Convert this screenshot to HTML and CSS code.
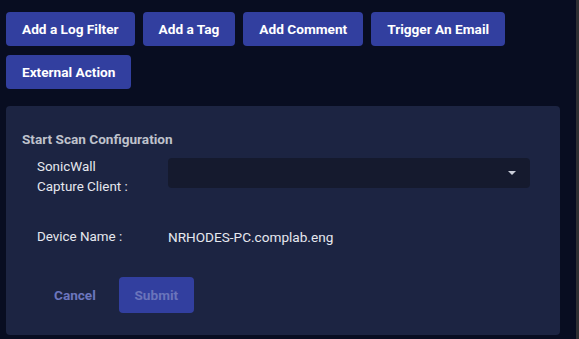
FILE: index.html
```html
<!DOCTYPE html>
<html lang="en">
<head>
    <meta charset="UTF-8">
    <meta name="viewport" content="width=device-width, initial-scale=1.0">
    <title>Actions</title>
    <link rel="stylesheet" href="styles.css">
</head>
<body>
    <div class="page">
        <div class="actions">
            <button class="action-btn">Add a Log Filter</button>
            <button class="action-btn">Add a Tag</button>
            <button class="action-btn">Add Comment</button>
            <button class="action-btn">Trigger An Email</button>
            <button class="action-btn">External Action</button>
        </div>

        <div class="panel">
            <h4 class="panel-title">Start Scan Configuration</h4>

            <div class="field">
                <label class="field-label">SonicWall<br>Capture Client :</label>
                <div class="select">
                    <span class="select-arrow"></span>
                </div>
            </div>

            <div class="field field-device">
                <span class="field-label">Device Name :</span>
                <span class="field-value">NRHODES-PC.complab.eng</span>
            </div>

            <div class="panel-footer">
                <button class="cancel-btn">Cancel</button>
                <button class="submit-btn" disabled>Submit</button>
            </div>
        </div>
    </div>
    <div class="scroll-edge"></div>
</body>
</html>
```

FILE: styles.css
```css
html, body {
    margin: 0;
    height: 100%;
}
body {
    font-family: Roboto, "Liberation Sans", Arial, sans-serif;
    background-color: #080d21;
    color: #e6e8ef;
    display: flex;
}
.page {
    flex: 1;
    padding: 8px 16px 0 6px;
}
.actions {
    display: flex;
    flex-wrap: wrap;
    gap: 0 8px;
}
.action-btn {
    font-family: inherit;
    font-size: 13.65px;
    font-weight: bold;
    color: #ffffff;
    background-color: #323f9f;
    border: none;
    border-radius: 4px;
    height: 34px;
    padding: 0 16px;
    margin: 4px 0 5px;
}
.panel {
    margin-top: 12px;
    background-color: #1c2442;
    border-radius: 4px;
    height: 229px;
    padding: 0 16px;
}
.panel-title {
    margin: 0;
    padding-top: 24px;
    font-size: 13.6px;
    font-weight: bold;
    color: #bfc2cc;
    line-height: 18px;
}
.field {
    display: flex;
    align-items: flex-start;
    padding-left: 15px;
    margin-top: 9px;
}
.field-label {
    width: 131px;
    font-size: 13.4px;
    line-height: 20px;
}
.select {
    margin-top: 1px;
    width: 362px;
    height: 30px;
    background-color: #151a2e;
    border-radius: 4px;
    display: flex;
    justify-content: flex-end;
    align-items: center;
    padding-right: 14px;
    box-sizing: border-box;
}
.select-arrow {
    width: 0;
    height: 0;
    border-left: 4px solid transparent;
    border-right: 4px solid transparent;
    border-top: 4px solid #c9cdd8;
}
.field-device {
    margin-top: 30px;
}
.field-value {
    font-size: 13.6px;
    line-height: 20px;
}
.panel-footer {
    display: flex;
    align-items: center;
    gap: 15px;
    margin-top: 30px;
    padding-left: 24px;
}
.cancel-btn {
    font-family: inherit;
    font-size: 13.6px;
    font-weight: bold;
    color: #6c76bd;
    background: none;
    border: none;
    padding: 0 8px;
}
.submit-btn {
    font-family: inherit;
    font-size: 13.6px;
    font-weight: bold;
    color: #6a74bb;
    background-color: #323f9f;
    border: none;
    border-radius: 4px;
    width: 75px;
    height: 36px;
}
.scroll-edge {
    width: 3px;
    background-color: #2e2f33;
}
```
